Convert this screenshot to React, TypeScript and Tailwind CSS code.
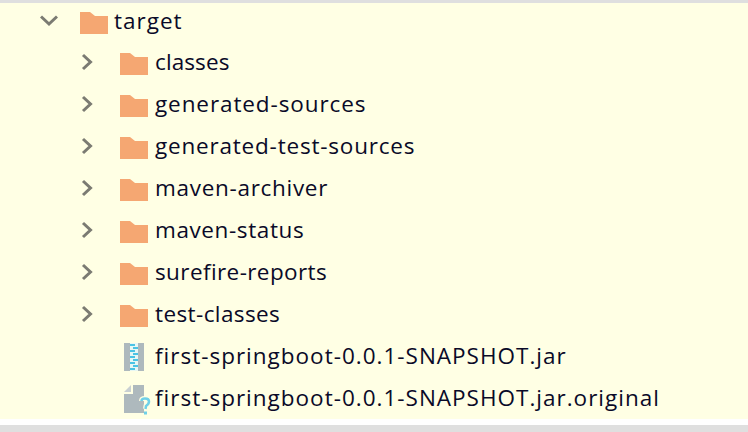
import React from 'react';

const folders = [
    { name: 'classes', tracking: 'tracking-[0.1px]' },
    { name: 'generated-sources', tracking: 'tracking-[0.9px]' },
    { name: 'generated-test-sources', tracking: 'tracking-[0.8px]' },
    { name: 'maven-archiver', tracking: 'tracking-[0.7px]' },
    { name: 'maven-status', tracking: 'tracking-[0.6px]' },
    { name: 'surefire-reports', tracking: 'tracking-[0.4px]' },
    { name: 'test-classes', tracking: 'tracking-[0.4px]' },
];

const FolderIcon: React.FC<{ className?: string }> = ({ className }) => (
    <svg width="28" height="22" viewBox="0 0 28 22" className={`shrink-0 ${className ?? ''}`}>
        <path d="M0 22V0H10L15 4H28V22Z" fill="#f5a772" />
    </svg>
);

const ChevronRight: React.FC = () => (
    <svg width="14" height="18" viewBox="0 0 14 18" className="shrink-0">
        <path d="M3 2L10.5 9L3 16" fill="none" stroke="#7b7b72" strokeWidth="3" />
    </svg>
);

const ChevronDown: React.FC = () => (
    <svg width="18" height="12" viewBox="0 0 18 12" className="shrink-0">
        <path d="M1 1.5L9 9L17 1.5" fill="none" stroke="#7b7b72" strokeWidth="3" />
    </svg>
);

const JarIcon: React.FC = () => (
    <svg width="20" height="28" viewBox="0 0 20 28" className="shrink-0">
        <rect x="0" y="0" width="20" height="28" fill="#aeb9bd" />
        <rect x="6" y="0" width="8" height="28" fill="#e8f8f4" />
        <path d="M6 1H11V3H6ZM9 4H14V6H9ZM6 7H11V9H6ZM9 10H14V12H9ZM6 13H11V15H6ZM9 16H14V18H9ZM6 19H11V21H6ZM9 22H14V24H9ZM6 25H11V27H6Z" fill="#4cc4e4" />
    </svg>
);

const UnknownFileIcon: React.FC = () => (
    <svg width="28" height="33" viewBox="0 0 28 33" className="shrink-0">
        <path d="M9 3H20V31H0V12H9Z" fill="#aeb9bd" />
        <path d="M0 10L7 3V10Z" fill="#c9d0d2" />
        <path d="M17.5 19Q17.5 16.5 21 16.5Q25 16.5 25 19.5Q25 22 22 24L21.5 27" fill="none" stroke="#ffffe4" strokeWidth="5" />
        <path d="M17.5 19Q17.5 16.5 21 16.5Q25 16.5 25 19.5Q25 22 22 24L21.5 27" fill="none" stroke="#6fd0e8" strokeWidth="2.5" />
        <rect x="20" y="29.5" width="3" height="3" fill="#6fd0e8" />
    </svg>
);

const App: React.FC = () => {
    return (
        <div className="w-[748px] h-[432px] overflow-hidden bg-[#dfdfdf] flex flex-col font-['Open_Sans',sans-serif] text-[22.5px] text-[#0a0a28]">
            <div className="h-[3px] shrink-0" />
            <div className="bg-[#ffffe4] h-[416px] shrink-0 flex flex-col">
                <div className="h-[39px] flex items-center pl-[40px]">
                    <div className="w-[40px] flex pb-[4px]"><ChevronDown /></div>
                    <FolderIcon />
                    <span className="ml-[6px] pb-[4px] tracking-[1px]">target</span>
                </div>
                {folders.map((folder) => (
                    <div key={folder.name} className="h-[42px] flex items-center pl-[80px]">
                        <div className="w-[40px] flex pb-[2px]"><ChevronRight /></div>
                        <FolderIcon className="mt-[2px]" />
                        <span className={`ml-[7px] pb-[2px] ${folder.tracking}`}>{folder.name}</span>
                    </div>
                ))}
                <div className="h-[42px] flex items-center pl-[124px]">
                    <div className="w-[31px] flex"><JarIcon /></div>
                    <span className="pb-[2px] tracking-[1px]">first-springboot-0.0.1-SNAPSHOT.jar</span>
                </div>
                <div className="h-[41px] flex items-center pl-[124px]">
                    <div className="w-[31px] flex"><UnknownFileIcon /></div>
                    <span className="pb-[2px] tracking-[1px]">first-springboot-0.0.1-SNAPSHOT.jar.original</span>
                </div>
            </div>
            <div className="h-[6px] shrink-0 bg-white" />
        </div>
    );
};

export default App;
